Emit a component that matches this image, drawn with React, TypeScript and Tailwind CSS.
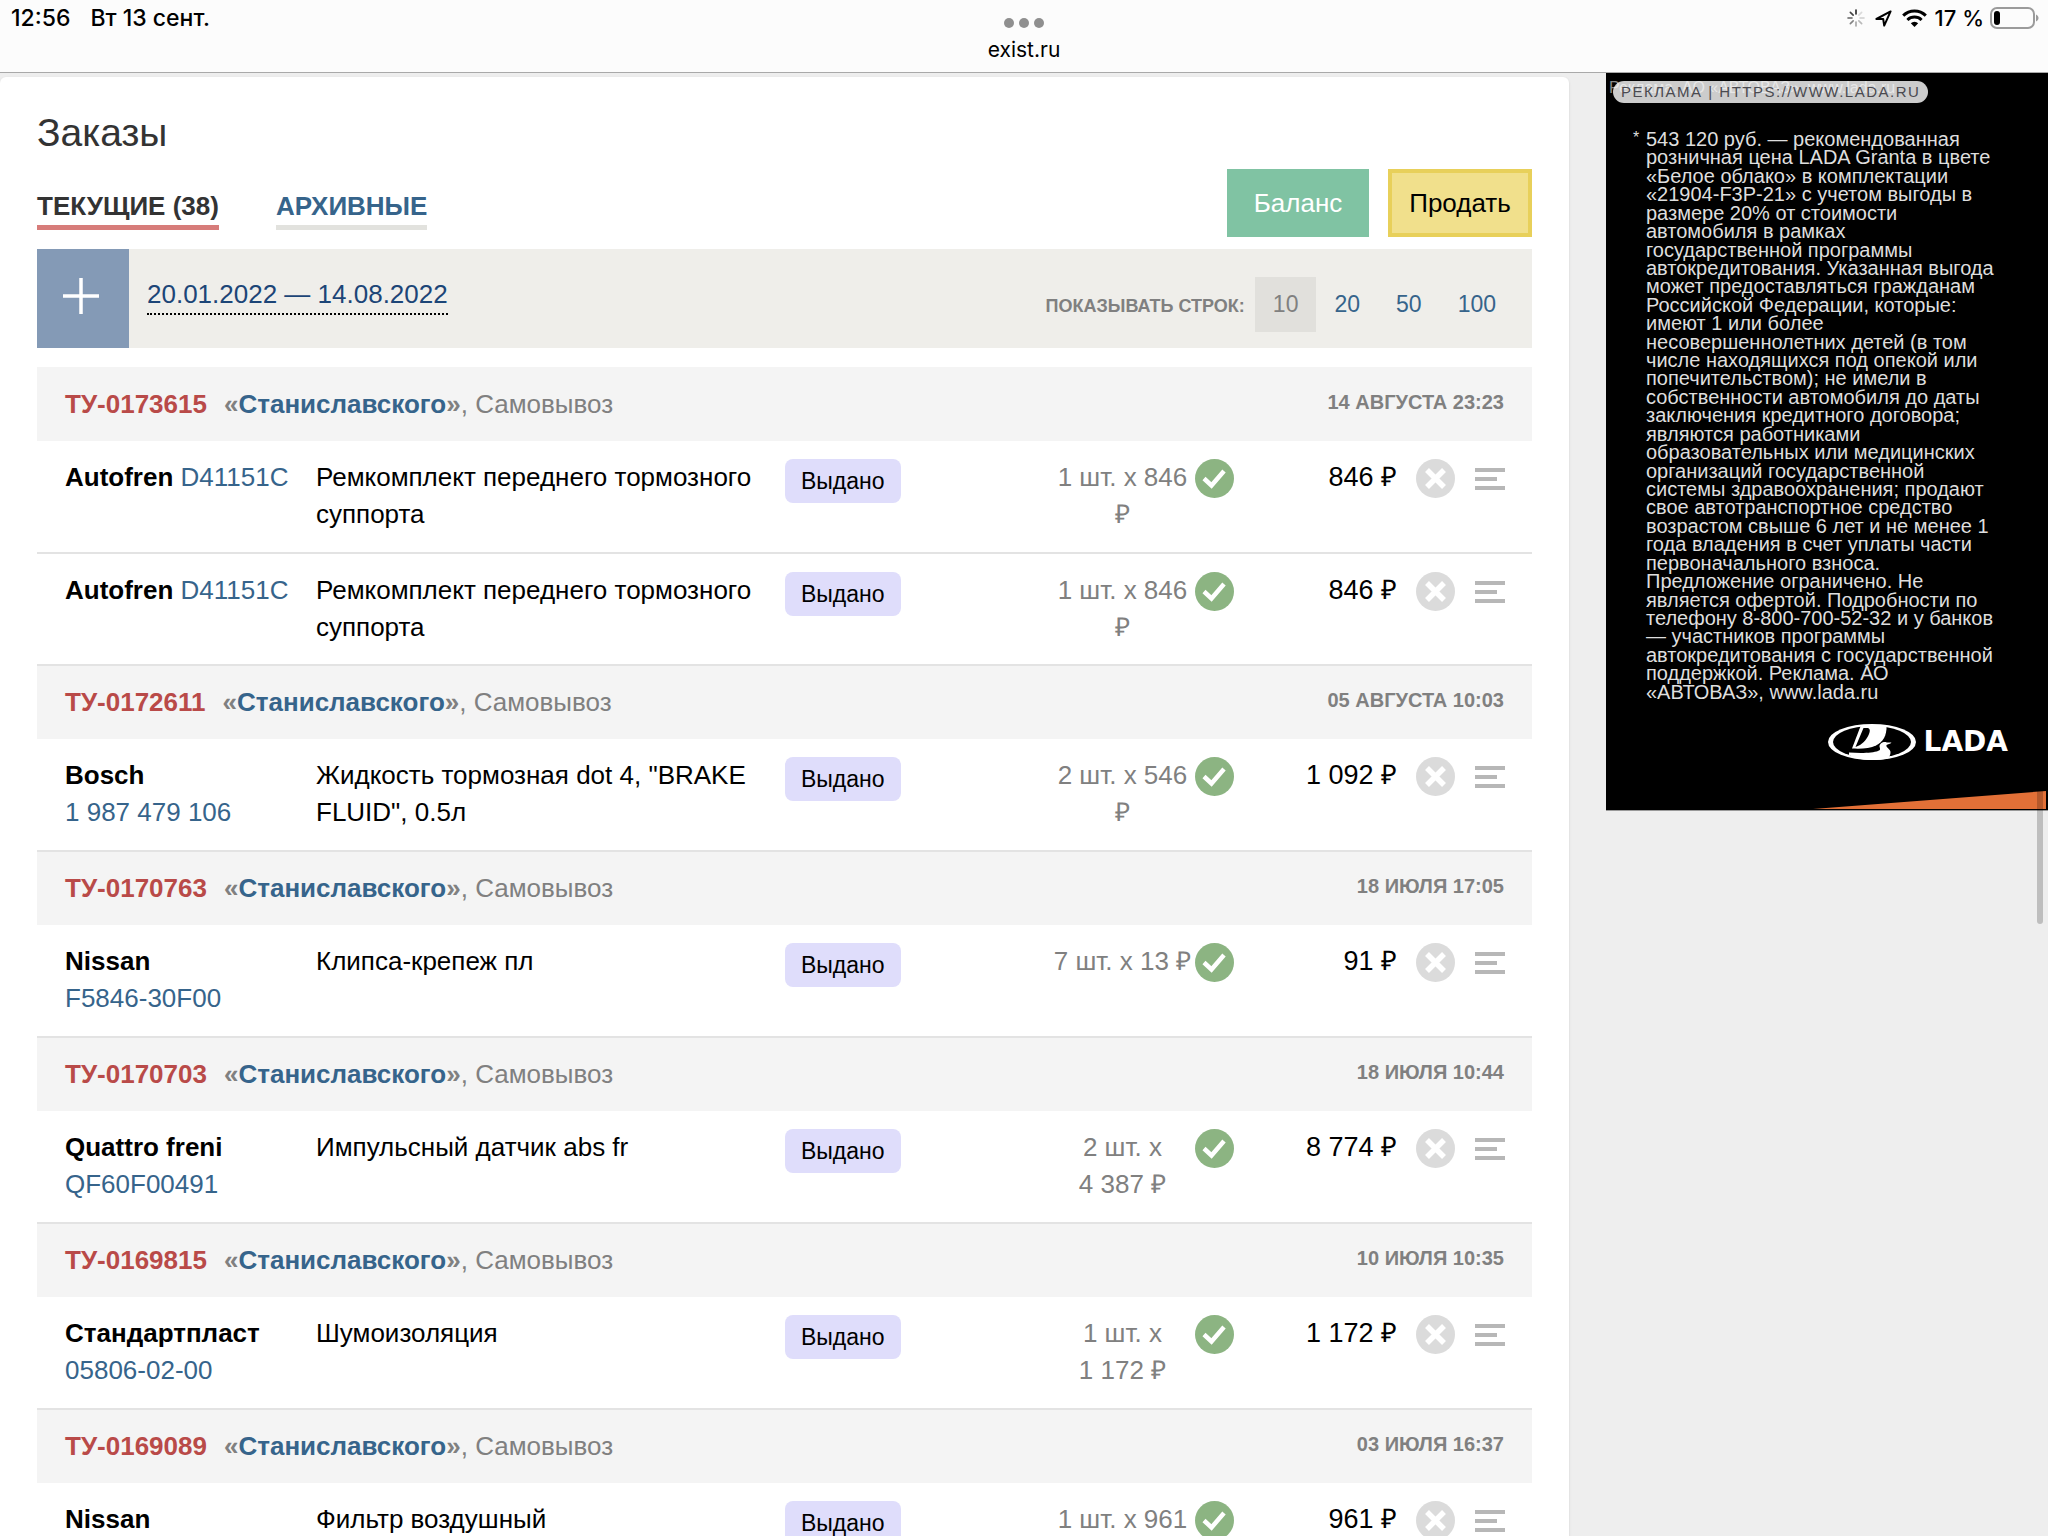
import React from 'react';

interface OrderItem {
  brand: string;
  code?: string;
  name: string;
  qty: string;
  price: string;
}

interface Order {
  id: string;
  date: string;
  items: OrderItem[];
}

const ORDERS: Order[] = [
  {
    id: 'ТУ-0173615',
    date: '14 августа 23:23',
    items: [
      { brand: 'Autofren', code: 'D41151C', name: 'Ремкомплект переднего тормозного суппорта', qty: '1 шт. x 846 ₽', price: '846 ₽' },
      { brand: 'Autofren', code: 'D41151C', name: 'Ремкомплект переднего тормозного суппорта', qty: '1 шт. x 846 ₽', price: '846 ₽' },
    ],
  },
  {
    id: 'ТУ-0172611',
    date: '05 августа 10:03',
    items: [{ brand: 'Bosch', code: '1 987 479 106', name: 'Жидкость тормозная dot 4, "BRAKE FLUID", 0.5л', qty: '2 шт. x 546 ₽', price: '1 092 ₽' }],
  },
  {
    id: 'ТУ-0170763',
    date: '18 июля 17:05',
    items: [{ brand: 'Nissan', code: 'F5846-30F00', name: 'Клипса-крепеж пл', qty: '7 шт. x 13 ₽', price: '91 ₽' }],
  },
  {
    id: 'ТУ-0170703',
    date: '18 июля 10:44',
    items: [{ brand: 'Quattro freni', code: 'QF60F00491', name: 'Импульсный датчик abs fr', qty: '2 шт. x 4\u00a0387\u00a0₽', price: '8 774 ₽' }],
  },
  {
    id: 'ТУ-0169815',
    date: '10 июля 10:35',
    items: [{ brand: 'Стандартпласт', code: '05806-02-00', name: 'Шумоизоляция', qty: '1 шт. x 1\u00a0172\u00a0₽', price: '1 172 ₽' }],
  },
  {
    id: 'ТУ-0169089',
    date: '03 июля 16:37',
    items: [{ brand: 'Nissan', name: 'Фильтр воздушный', qty: '1 шт. x 961', price: '961 ₽' }],
  },
];

const AD_LINES = [
  '543 120 руб. — рекомендованная',
  'розничная цена LADA Granta в цвете',
  '«Белое облако» в комплектации',
  '«21904-F3P-21» с учетом выгоды в',
  'размере 20% от стоимости',
  'автомобиля в рамках',
  'государственной программы',
  'автокредитования. Указанная выгода',
  'может предоставляться гражданам',
  'Российской Федерации, которые:',
  'имеют 1 или более',
  'несовершеннолетних детей (в том',
  'числе находящихся под опекой или',
  'попечительством); не имели в',
  'собственности автомобиля до даты',
  'заключения кредитного договора;',
  'являются работниками',
  'образовательных или медицинских',
  'организаций государственной',
  'системы здравоохранения; продают',
  'свое автотранспортное средство',
  'возрастом свыше 6 лет и не менее 1',
  'года владения в счет уплаты части',
  'первоначального взноса.',
  'Предложение ограничено. Не',
  'является офертой. Подробности по',
  'телефону 8-800-700-52-32 и у банков',
  '— участников программы',
  'автокредитования с государственной',
  'поддержкой. Реклама. АО',
  '«АВТОВАЗ», www.lada.ru',
];

const SPINNER_OPACITY = [1, 0.15, 0.2, 0.3, 0.4, 0.55, 0.7, 0.85];

const StatusBar: React.FC = () => (
  <header className="grid h-[73px] grid-cols-3 items-start border-b border-[#a9a9a9] bg-[#fcfcfc] font-['Inter',sans-serif] text-black">
    <div className="flex gap-5 pt-1 pl-[11px] text-[23px] leading-7 font-medium">
      <span>12:56</span>
      <span>Вт 13 сент.</span>
    </div>
    <div className="flex flex-col items-center gap-2 pt-[18px]">
      <button type="button" aria-label="Многозадачность" className="flex gap-[5px]">
        <span className="size-[10px] rounded-full bg-[#8f8f8f]" />
        <span className="size-[10px] rounded-full bg-[#8f8f8f]" />
        <span className="size-[10px] rounded-full bg-[#8f8f8f]" />
      </button>
      <span className="text-[21px] leading-7">exist.ru</span>
    </div>
    <div className="flex items-center justify-end pt-1 pr-[9px] text-[22px] leading-7 font-medium">
      <svg className="mr-[10px] size-[18px]" viewBox="0 0 18 18" stroke="#222" strokeWidth="1.6" strokeLinecap="round">
        {SPINNER_OPACITY.map((opacity, i) => (
          <line key={i} x1="9" y1="1" x2="9" y2="5" opacity={opacity} transform={`rotate(${i * 45} 9 9)`} />
        ))}
      </svg>
      <svg className="mr-[10px] size-[17px]" viewBox="0 0 17 17" fill="none" stroke="#000" strokeWidth="2" strokeLinejoin="round">
        <path d="M15.6 1.4 1.4 9h6.800l1 6.600z" />
      </svg>
      <svg className="mr-2 h-[18px] w-[25px]" viewBox="0 0 25 18" fill="none" stroke="#000" strokeWidth="3">
        <path d="M1.2 6.6a16 16 0 0 1 22.6 0" />
        <path d="M5.4 11a10.2 10.2 0 0 1 14.2 0" />
        <path d="M12.5 18 8.8 14.2a5.3 5.3 0 0 1 7.4 0z" fill="#000" stroke="none" />
      </svg>
      <span className="mr-[6px]">17 %</span>
      <svg className="h-[22px] w-[49px]" viewBox="0 0 49 22" fill="none">
        <rect x="1" y="1" width="43" height="20" rx="6" stroke="#9b9b9b" strokeWidth="2" />
        <rect x="4" y="4" width="6" height="14" rx="3" fill="#000" />
        <path d="M46 7.5c1.7.7 2.5 2 2.5 3.5s-.8 2.8-2.5 3.5z" fill="#9b9b9b" />
      </svg>
    </div>
  </header>
);

const CheckIcon: React.FC = () => (
  <svg className="size-[39px]" viewBox="0 0 39 39" fill="none">
    <circle cx="19.5" cy="19.5" r="19.5" fill="#8cb482" />
    <path d="M9 19.500l7.500 7L29 12" stroke="#fff" strokeWidth="4.5" />
  </svg>
);

const CancelIcon: React.FC = () => (
  <svg className="size-[39px]" viewBox="0 0 39 39" fill="none">
    <circle cx="19.5" cy="19.5" r="19.5" fill="#dbdbdb" />
    <path d="M11 11l17 17M28 11l-17 17" stroke="#fff" strokeWidth="5.5" />
  </svg>
);

const MenuIcon: React.FC = () => (
  <svg className="h-[22px] w-[30px]" viewBox="0 0 30 22" fill="#b7b7b7">
    <rect width="30" height="4" />
    <rect y="9" width="22" height="4" />
    <rect y="18" width="30" height="4" />
  </svg>
);

const OrderGroup: React.FC<{ order: Order }> = ({ order }) => (
  <tbody>
    <tr className="h-[74px] bg-[#f4f4f4]">
      <th colSpan={4} scope="rowgroup" className="pl-7 text-left font-normal text-[#808080]">
        <a href="#" className="mr-[17px] font-bold text-[#b94a48]">{order.id}</a>
        <b>«</b>
        <a href="#" className="font-bold text-[#36648b]">Станиславского</a>
        <b>»</b>, Самовывоз
      </th>
      <td colSpan={4} className="pr-7 pb-1 text-right text-[20px] font-bold text-[#808080] uppercase">{order.date}</td>
    </tr>
    {order.items.map((item, i) => (
      <tr key={i} className="h-[112px] border-b-2 border-[#e3e3e3] align-top">
        <td className="pt-[18px] pr-[18px] pl-7">
          <b>{item.brand}</b>{' '}
          {item.code && <a href="#" className="inline-block whitespace-nowrap text-[#36648b]">{item.code}</a>}
        </td>
        <td className="pt-[18px] pr-5">{item.name}</td>
        <td className="pt-[18px]">
          <span className="inline-block rounded-lg bg-[#dfddfb] px-4 text-[23px] leading-[44px]">Выдано</span>
        </td>
        <td className="pt-[18px] text-center text-[#808080]">{item.qty}</td>
        <td className="pt-[18px] pl-0.5"><CheckIcon /></td>
        <td className="pt-[18px] text-right text-[27px] whitespace-nowrap">{item.price}</td>
        <td className="pt-[18px] pl-[19px]">
          <button type="button" aria-label="Отменить" className="block"><CancelIcon /></button>
        </td>
        <td className="pt-[27px] pl-4">
          <button type="button" aria-label="Меню" className="block"><MenuIcon /></button>
        </td>
      </tr>
    ))}
  </tbody>
);

const LadaBanner: React.FC = () => (
  <aside className="relative w-[442px] shrink-0 self-start overflow-hidden border-b border-[#999] bg-black text-[#dedede]">
    <span className="absolute top-[5px] left-[3px] text-[16px] leading-5 whitespace-nowrap text-[#888]">Реклама. АО «АВТОВАЗ», www.lada.ru</span>
    <div className="relative flex px-[7px] pt-2">
      <a href="#" className="rounded-full bg-white/80 px-2 text-[15px] leading-[22px] tracking-widest whitespace-nowrap text-[#4a4a50] uppercase">
        Реклама | https://www.lada.ru
      </a>
    </div>
    <div className="flex gap-1 pt-[27px] pl-[27px]">
      <span className="w-[9px] text-[16px] leading-4">*</span>
      <div className="flex h-[571px] flex-col justify-between text-[20px] leading-[18px] whitespace-nowrap">
        {AD_LINES.map((line) => (
          <span key={line}>{line}</span>
        ))}
      </div>
    </div>
    <div className="flex items-center justify-end gap-2 pt-[23px] pr-10 pb-[31px]">
      <svg className="h-9 w-[88px]" viewBox="0 0 88 36">
        <ellipse cx="44" cy="18" rx="44" ry="18" fill="#fff" />
        <ellipse cx="44" cy="18" rx="39" ry="16" fill="#000" />
        <path d="M33 1 24 24.500c9 .5 18 0 24-3 7-3.500 11-10 10.500-20z" fill="#fff" />
        <path d="M35.500 4h3.500c3 0 3.500 2.500 2 6-2.500 6-7 11-13.500 13z" fill="#000" />
        <path d="M21 28.500c12 1 24 .5 29-1.500 3-1 2-2.500 1.500-4.500 0-2.500 2.500-4.500 5.500-4.500 1 0 1.500.5 2.500.5h4c-1 1.500-4 1.500-5 2.500-1 2.500 4 4 4 7 0 3-1 5-3 6.500-5 1.500-10 1.500-16 1.500-8 0-17-2-22.500-5z" fill="#fff" />
      </svg>
      <span className="font-['DejaVu_Sans',sans-serif] text-[28px] leading-9 font-bold text-white">LADA</span>
    </div>
    <svg className="mr-[2px] mb-px ml-auto block h-[18px] w-[233px]" viewBox="0 0 233 18">
      <path d="M0 18 233 0v18z" fill="#e27037" />
    </svg>
  </aside>
);

const App: React.FC = () => (
  <div className="relative h-screen overflow-hidden bg-[#eee] font-['Liberation_Sans',Arial,sans-serif] text-[26px] leading-[37px] text-black">
    <StatusBar />
    <div className="flex gap-[37px]">
      <main className="mt-1 min-w-0 flex-1 rounded-md bg-white px-[37px] pt-[33px] shadow-sm">
        <h1 className="text-[39px] leading-[45px] text-[#333]">Заказы</h1>

        {/* вкладки и действия */}
        <div className="flex items-start justify-between pt-[14px]">
          <nav className="flex gap-[57px] pt-[19px] font-bold uppercase">
            <a href="#" className="border-b-5 border-[#d77c7a] text-[#333]">Текущие (38)</a>
            <a href="#" className="border-b-5 border-[#e2e2de] text-[#36648b]">Архивные</a>
          </nav>
          <div className="flex gap-[19px]">
            <button type="button" className="h-[68px] w-[142px] bg-[#80c3a3] text-white">Баланс</button>
            <button type="button" className="h-[68px] w-[144px] border-4 border-[#e8d05a] bg-[#f1e08c]">Продать</button>
          </div>
        </div>

        {/* период и количество строк */}
        <div className="mt-3 flex h-[99px] items-center bg-[#efeeea]">
          <button type="button" aria-label="Добавить" className="flex h-full w-[92px] items-center justify-center bg-[#849ab6] pr-1 pb-1.5">
            <svg className="size-9" viewBox="0 0 36 36" stroke="#fff" strokeWidth="3.5">
              <path d="M18 0v36M0 18h36" />
            </svg>
          </button>
          <a href="#" className="mb-1.5 ml-[18px] border-b-2 border-dotted border-black text-[#1c4577]">20.01.2022 — 14.08.2022</a>
          <div className="mt-3 mr-[18px] ml-auto flex items-baseline text-[23px]">
            <span className="mr-[10px] text-[18px] font-bold text-[#808080] uppercase">Показывать строк:</span>
            <span className="bg-[#e1e0dc] px-[18px] py-[9px] text-[#808080]">10</span>
            <a href="#" className="px-[18px] text-[#36648b]">20</a>
            <a href="#" className="px-[18px] text-[#36648b]">50</a>
            <a href="#" className="px-[18px] text-[#36648b]">100</a>
          </div>
        </div>

        <table className="mt-[19px] w-full table-fixed border-collapse">
          <colgroup>
            <col className="w-[279px]" />
            <col />
            <col className="w-[267px]" />
            <col className="w-[141px]" />
            <col className="w-[45px]" />
            <col className="w-[159px]" />
            <col className="w-[62px]" />
            <col className="w-[73px]" />
          </colgroup>
          {ORDERS.map((order) => (
            <OrderGroup key={order.id} order={order} />
          ))}
        </table>
      </main>
      <LadaBanner />
    </div>
    {/* полоса прокрутки поверх страницы */}
    <div className="absolute top-[745px] right-[5px] h-[179px] w-[6px] rounded-full bg-black/20" />
  </div>
);

export default App;
